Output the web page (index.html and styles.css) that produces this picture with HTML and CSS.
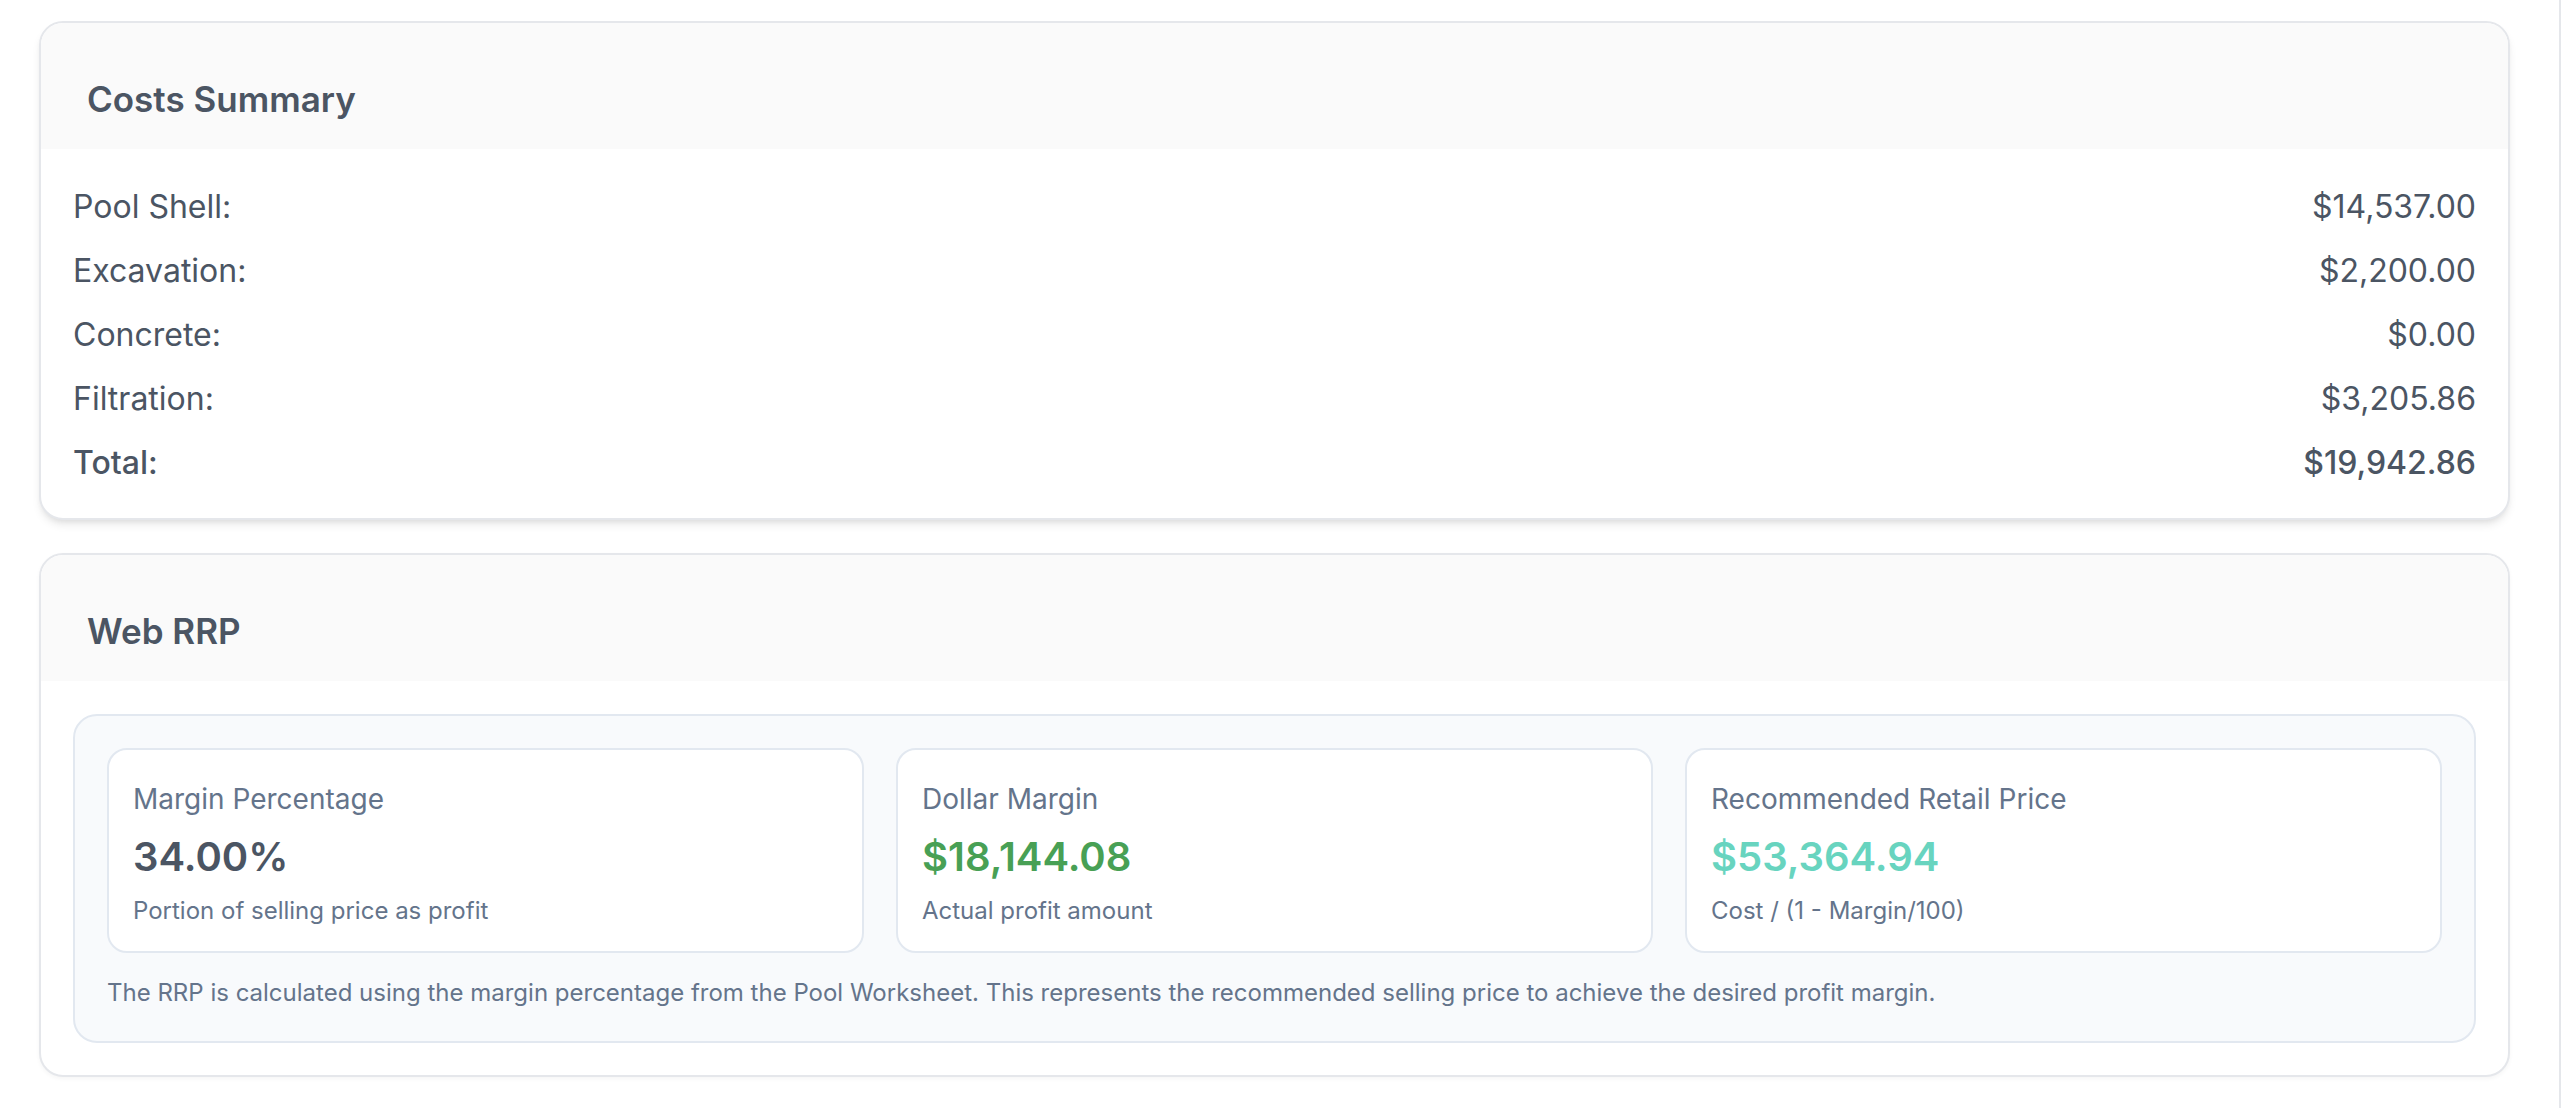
FILE: index.html
```html
<!DOCTYPE html>
<html lang="en">
<head>
<meta charset="utf-8">
<title>Costs Summary</title>
<link rel="stylesheet" href="styles.css">
</head>
<body>
<div class="page">
  <section class="card card-costs">
    <header class="card-head"><h2 class="card-title">Costs Summary</h2></header>
    <div class="card-body costs-body">
      <div class="row"><span>Pool Shell:</span><span>$14,537.00</span></div>
      <div class="row"><span>Excavation:</span><span>$2,200.00</span></div>
      <div class="row"><span>Concrete:</span><span>$0.00</span></div>
      <div class="row"><span>Filtration:</span><span>$3,205.86</span></div>
      <div class="row row-total"><span>Total:</span><span>$19,942.86</span></div>
    </div>
  </section>

  <section class="card card-rrp">
    <header class="card-head"><h2 class="card-title">Web RRP</h2></header>
    <div class="card-body rrp-body">
      <div class="rrp-box">
        <div class="stats">
          <div class="stat">
            <div class="stat-label">Margin Percentage</div>
            <div class="stat-value">34.00%</div>
            <div class="stat-sub">Portion of selling price as profit</div>
          </div>
          <div class="stat">
            <div class="stat-label">Dollar Margin</div>
            <div class="stat-value value-green">$18,144.08</div>
            <div class="stat-sub">Actual profit amount</div>
          </div>
          <div class="stat">
            <div class="stat-label">Recommended Retail Price</div>
            <div class="stat-value value-teal">$53,364.94</div>
            <div class="stat-sub">Cost / (1 - Margin/100)</div>
          </div>
        </div>
        <p class="note">The RRP is calculated using the margin percentage from the Pool Worksheet. This represents the recommended selling price to achieve the desired profit margin.</p>
      </div>
    </div>
  </section>
</div>
</body>
</html>
```

FILE: styles.css
```css
* { box-sizing: border-box; }

html, body {
  margin: 0;
  padding: 0;
  background: #ffffff;
}

body {
  font-family: Inter, "Noto Sans", "Liberation Sans", sans-serif;
  color: #4b5563;
}

.page {
  width: 2561px;
  min-height: 1108px;
  border-right: 2px solid #e5e7eb;
  padding: 21px 49px 0 39px;
  display: flex;
  flex-direction: column;
  gap: 33px;
}

.card {
  background: #ffffff;
  border: 2px solid #e5e7eb;
  border-radius: 24px;
  overflow: hidden;
}

.card-costs {
  box-shadow: 0 6px 10px -2px rgba(0, 0, 0, 0.10), 0 3px 6px -3px rgba(0, 0, 0, 0.08);
}

.card-rrp {
  box-shadow: 0 2px 4px rgba(0, 0, 0, 0.04);
}

.card-head {
  background: #fafafa;
  padding: 48px 46px 22px;
  height: 126px;
}

.card-title {
  margin: 0;
  font-size: 35px;
  line-height: 56px;
  font-weight: 600;
  color: #4b5563;
}

.costs-body {
  padding: 26px 32px 23px;
}

.row {
  display: flex;
  justify-content: space-between;
  align-items: center;
  height: 64px;
  font-size: 32px;
  line-height: 64px;
  color: #4b5563;
}

.row-total {
  font-weight: 500;
}

.rrp-body {
  padding: 33px 32px 32px;
}

.rrp-box {
  background: #f8fafc;
  border: 2px solid #e2e8f0;
  border-radius: 24px;
  padding: 32px;
}

.stats {
  display: grid;
  grid-template-columns: repeat(3, 1fr);
  gap: 32px;
}

.stat {
  background: #ffffff;
  border: 2px solid #e2e8f0;
  border-radius: 20px;
  padding: 29px 24px 24px;
}

.stat-label {
  font-size: 28px;
  line-height: 40px;
  color: #64748b;
  margin-bottom: 10px;
}

.stat-value {
  font-size: 40px;
  line-height: 56px;
  font-weight: 600;
  color: #4b5563;
  margin-bottom: 10px;
}

.value-green { color: #48a055; }
.value-teal { color: #68d4bf; }

.stat-sub {
  font-size: 24px;
  line-height: 32px;
  color: #64748b;
}

.note {
  margin: 24px 0 0;
  font-size: 24px;
  line-height: 32px;
  color: #64748b;
}
```
